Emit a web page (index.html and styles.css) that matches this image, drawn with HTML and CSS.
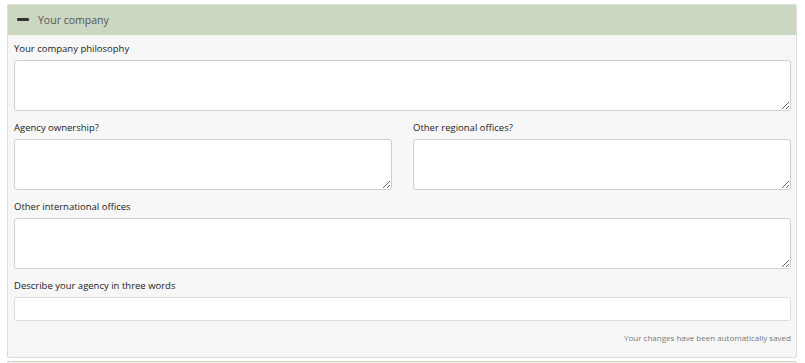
FILE: index.html
```html
<!DOCTYPE html>
<html>
<head>
<meta charset="utf-8">
<link rel="stylesheet" href="styles.css">
</head>
<body>
<div class="panel">
  <div class="panel-head">
    <span class="minus"></span>
    <span class="title">Your company</span>
  </div>
  <div class="panel-body">
    <div class="field">
      <label class="lbl">Your company philosophy</label>
      <textarea class="ta"></textarea>
    </div>
    <div class="row">
      <div class="field">
        <label class="lbl">Agency ownership?</label>
        <textarea class="ta"></textarea>
      </div>
      <div class="field">
        <label class="lbl">Other regional offices?</label>
        <textarea class="ta"></textarea>
      </div>
    </div>
    <div class="field">
      <label class="lbl">Other international offices</label>
      <textarea class="ta"></textarea>
    </div>
    <div class="field">
      <label class="lbl">Describe your agency in three words</label>
      <input class="inp" type="text">
    </div>
    <div class="saved">Your changes have been automatically saved</div>
  </div>
</div>
<div class="panel next"></div>
</body>
</html>
```

FILE: styles.css
```css
html, body {
  margin: 0;
  padding: 0;
  background: #ffffff;
}
body {
  padding: 4px 8px 0 7px;
  font-family: "Open Sans", "DejaVu Sans", sans-serif;
  color: #333;
}
.panel {
  border: 1px solid #dcdcdc;
  border-radius: 2px;
  background: #f7f7f7;
  overflow: hidden;
}
.panel-head {
  height: 31px;
  background: #cbd7c0;
  display: flex;
  align-items: center;
  padding-left: 10px;
  margin: -1px -1px 0 -1px;
}
.minus {
  display: inline-block;
  width: 12px;
  height: 3px;
  background: #333;
  border-radius: 1px;
  margin-right: 9px;
}
.title {
  font-size: 10.5px;
  color: #555;
}
.panel-body {
  padding: 6px 5px 0 6px;
}
.field {
  display: flex;
  flex-direction: column;
  margin-bottom: 9px;
}
.lbl {
  font-size: 9.5px;
  line-height: 16px;
  height: 16px;
  margin-bottom: 3px;
  color: #222;
}
.ta {
  box-sizing: border-box;
  height: 51px;
  border: 1px solid #cfcfcf;
  border-radius: 3px;
  background: #fff;
  resize: vertical;
  margin: 0;
  font-family: inherit;
}
.row {
  display: grid;
  grid-template-columns: 1fr 1fr;
  column-gap: 21px;
}
.inp {
  box-sizing: border-box;
  height: 24px;
  border: 1px solid #dcdcdc;
  border-radius: 3px;
  background: #fff;
  margin: 0;
}
.saved {
  text-align: right;
  font-size: 8px;
  color: #777;
  line-height: 12px;
  padding-top: 2px;
  padding-bottom: 13px;
}
.panel.next {
  margin-top: 3px;
  height: 20px;
  border-color: #c6d6b8;
}
```
